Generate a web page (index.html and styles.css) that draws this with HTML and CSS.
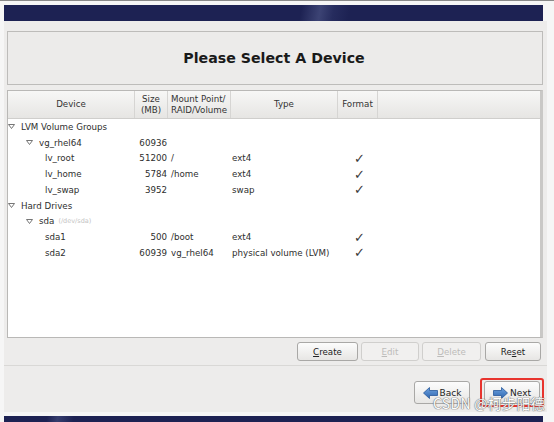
FILE: index.html
```html
<!DOCTYPE html>
<html lang="en">
<head>
  <meta charset="UTF-8">
  <title>Please Select A Device</title>
  <link rel="stylesheet" href="styles.css">
</head>
<body>
  <div class="screen">
    <!-- Top banner -->
    <div class="banner"></div>

    <!-- Installer window -->
    <div class="window">
      <div class="title-box">
        <h1>Please Select A Device</h1>
      </div>

      <!-- Device tree -->
      <div class="tree">
        <div class="tree-head">
          <div class="hcol">Device</div>
          <div class="hcol">Size<br>(MB)</div>
          <div class="hcol hcol-left">Mount Point/<br>RAID/Volume</div>
          <div class="hcol">Type</div>
          <div class="hcol">Format</div>
          <div class="hcol hcol-fill"></div>
        </div>
        <div class="tree-body">
          <div class="row">
            <div class="c-dev lvl0"><span class="arrow"><svg width="7" height="5" viewBox="0 0 7 5"><polygon points="0.5,0.5 6.5,0.5 3.5,4.5" fill="#fff" stroke="#666" stroke-width="0.9"/></svg></span>LVM Volume Groups</div>
            <div class="c-size"></div><div class="c-mount"></div><div class="c-type"></div><div class="c-fmt"></div>
          </div>
          <div class="row">
            <div class="c-dev lvl1"><span class="arrow"><svg width="7" height="5" viewBox="0 0 7 5"><polygon points="0.5,0.5 6.5,0.5 3.5,4.5" fill="#fff" stroke="#666" stroke-width="0.9"/></svg></span>vg_rhel64</div>
            <div class="c-size">60936</div><div class="c-mount"></div><div class="c-type"></div><div class="c-fmt"></div>
          </div>
          <div class="row">
            <div class="c-dev lvl2"><span class="arrow"></span>lv_root</div>
            <div class="c-size">51200</div><div class="c-mount">/</div><div class="c-type">ext4</div><div class="c-fmt">✓</div>
          </div>
          <div class="row">
            <div class="c-dev lvl2"><span class="arrow"></span>lv_home</div>
            <div class="c-size">5784</div><div class="c-mount">/home</div><div class="c-type">ext4</div><div class="c-fmt">✓</div>
          </div>
          <div class="row">
            <div class="c-dev lvl2"><span class="arrow"></span>lv_swap</div>
            <div class="c-size">3952</div><div class="c-mount"></div><div class="c-type">swap</div><div class="c-fmt">✓</div>
          </div>
          <div class="row">
            <div class="c-dev lvl0"><span class="arrow"><svg width="7" height="5" viewBox="0 0 7 5"><polygon points="0.5,0.5 6.5,0.5 3.5,4.5" fill="#fff" stroke="#666" stroke-width="0.9"/></svg></span>Hard Drives</div>
            <div class="c-size"></div><div class="c-mount"></div><div class="c-type"></div><div class="c-fmt"></div>
          </div>
          <div class="row">
            <div class="c-dev lvl1"><span class="arrow"><svg width="7" height="5" viewBox="0 0 7 5"><polygon points="0.5,0.5 6.5,0.5 3.5,4.5" fill="#fff" stroke="#666" stroke-width="0.9"/></svg></span>sda <span class="dev-path">(/dev/sda)</span></div>
            <div class="c-size"></div><div class="c-mount"></div><div class="c-type"></div><div class="c-fmt"></div>
          </div>
          <div class="row">
            <div class="c-dev lvl2"><span class="arrow"></span>sda1</div>
            <div class="c-size">500</div><div class="c-mount">/boot</div><div class="c-type">ext4</div><div class="c-fmt">✓</div>
          </div>
          <div class="row">
            <div class="c-dev lvl2"><span class="arrow"></span>sda2</div>
            <div class="c-size">60939</div><div class="c-mount">vg_rhel64</div><div class="c-type">physical volume (LVM)</div><div class="c-fmt">✓</div>
          </div>
        </div>
      </div>

      <!-- Tree actions -->
      <div class="actions">
        <button class="btn btn-create"><u>C</u>reate</button>
        <button class="btn btn-edit" disabled><u>E</u>dit</button>
        <button class="btn btn-delete" disabled><u>D</u>elete</button>
        <button class="btn btn-reset">Re<u>s</u>et</button>
      </div>

      <div class="divider"></div>

      <!-- Navigation -->
      <div class="nav">
        <button class="btn nav-btn">
          <svg width="15" height="12" viewBox="0 0 15 12"><defs><linearGradient id="ab" x1="0" y1="0" x2="0" y2="1"><stop offset="0" stop-color="#6fa3e0"/><stop offset="1" stop-color="#2e66b0"/></linearGradient></defs><polygon points="0.5,6 6.5,0.5 6.5,3.5 14.5,3.5 14.5,8.5 6.5,8.5 6.5,11.5" fill="url(#ab)" stroke="#27589a" stroke-width="0.8"/></svg>
          Back
        </button>
        <div class="highlight">
          <button class="btn nav-btn">
            <svg width="15" height="12" viewBox="0 0 15 12"><defs><linearGradient id="an" x1="0" y1="0" x2="0" y2="1"><stop offset="0" stop-color="#6fa3e0"/><stop offset="1" stop-color="#2e66b0"/></linearGradient></defs><polygon points="14.5,6 8.5,0.5 8.5,3.5 0.5,3.5 0.5,8.5 8.5,8.5 8.5,11.5" fill="url(#an)" stroke="#27589a" stroke-width="0.8"/></svg>
            Next
          </button>
        </div>
      </div>
    </div>

    <div class="gap"></div>
    <div class="banner banner-bottom"></div>

    <div class="watermark">CSDN @柯步阳德</div>
  </div>
</body>
</html>
```

FILE: styles.css
```css
/* General */
body {
  margin: 0;
  padding: 0;
  background-color: #f6f6f6;
  font-family: "DejaVu Sans", sans-serif;
  font-size: 8.7px;
  color: #2e2e2e;
}

.screen {
  position: relative;
  width: 554px;
  height: 422px;
  overflow: hidden;
  border-top: 1px solid #8a8a8a;
  box-sizing: border-box;
}

/* Banners */
.banner {
  height: 16px;
  margin: 4px 11px 0 4px;
  background: linear-gradient(100deg, #1d2253 0%, #1d2253 55%, #3c4374 58.5%, #262c5e 61%, #1d2253 64%, #1d2253 100%);
}

.banner-bottom {
  margin-top: 0;
  height: 6px;
  background: linear-gradient(100deg, #1d2253 0%, #1d2253 8%, #363d6e 10%, #1d2253 13%, #1d2253 100%);
}

.gap {
  height: 4px;
}

/* Window */
.window {
  height: 391px;
  margin: 0 7px 0 4px;
  padding: 0 4px 0 3px;
  background-color: #edeceb;
  display: flex;
  flex-direction: column;
  box-sizing: border-box;
}

.title-box {
  margin-top: 10px;
  height: 54px;
  border: 1px solid #bdbcba;
  background-color: #ecebea;
  display: flex;
  align-items: center;
  justify-content: center;
  box-sizing: border-box;
}

.title-box h1 {
  margin: 0 0 0 -2px;
  font-size: 14.2px;
  font-weight: bold;
  color: #1a1a1a;
}

/* Tree view */
.tree {
  margin-top: 5px;
  height: 248px;
  border: 1px solid #b9b8b6;
  border-right: 3px solid #c9c8c6;
  background-color: #ffffff;
  box-sizing: border-box;
}

.tree-head,
.row {
  display: grid;
  grid-template-columns: 127px 33px 63px 107px 40px 1fr;
}

.tree-head {
  height: 28px;
  background: linear-gradient(#f7f7f6, #e6e5e3);
  border-bottom: 1px solid #cfcecc;
  box-sizing: border-box;
}

.hcol {
  display: flex;
  align-items: center;
  justify-content: center;
  text-align: center;
  line-height: 11px;
  color: #333;
  border-right: 1px solid #d6d5d3;
}

.hcol-left {
  justify-content: flex-start;
  text-align: left;
  padding-left: 3px;
}

.hcol-fill {
  border-right: none;
}

.row {
  height: 15.75px;
  align-items: center;
  white-space: nowrap;
}

.c-dev {
  display: flex;
  align-items: center;
}

.lvl0 { padding-left: 0; }
.lvl1 { padding-left: 18px; }
.lvl2 { padding-left: 24px; }

.arrow {
  display: inline-flex;
  width: 13px;
  align-items: center;
}

.dev-path {
  margin-left: 4px;
  font-size: 6.5px;
  color: #c4c4c4;
}

.c-size {
  text-align: right;
  padding-right: 1px;
}

.c-mount {
  padding-left: 3px;
}

.c-type {
  padding-left: 1px;
}

.c-fmt {
  text-align: center;
  padding-left: 3px;
  font-size: 13px;
  line-height: 13px;
  color: #3a3a3a;
}

/* Buttons */
.btn {
  font-family: "DejaVu Sans", sans-serif;
  font-size: 8.7px;
  color: #222;
  background: linear-gradient(#fcfcfc, #e7e6e4);
  border: 1px solid #a9a8a6;
  border-radius: 3px;
  padding: 0;
  cursor: pointer;
}

.btn:disabled {
  color: #bdbcba;
  background: #f1f0ef;
  border-color: #d0cfcd;
}

.actions {
  margin-top: 4px;
  padding-right: 2px;
  display: flex;
  justify-content: flex-end;
  gap: 3px;
}

.actions .btn {
  height: 19px;
}

.btn-create { width: 61px; }
.btn-edit { width: 58px; }
.btn-delete { width: 59px; }
.btn-reset { width: 56px; margin-left: 1px; }

.divider {
  margin: 4px -4px 0 -3px;
  border-top: 1px solid #d9d8d6;
}

.nav {
  margin: 12px -1px 0 0;
  display: flex;
  justify-content: flex-end;
  align-items: center;
  gap: 10px;
}

.nav-btn {
  width: 56px;
  height: 23px;
  display: flex;
  align-items: center;
  justify-content: center;
  gap: 2px;
  font-size: 9px;
}

.highlight {
  padding: 1px 2px;
  border: 2px solid #e8342e;
  border-radius: 3px;
}

/* Watermark */
.watermark {
  position: absolute;
  right: 9px;
  bottom: 9px;
  font-family: "Noto Sans CJK SC", "DejaVu Sans", sans-serif;
  font-size: 14px;
  color: #ffffff;
  letter-spacing: 0.3px;
  text-shadow: 0 0 1px #6d6d6d, 0 0 1px #6d6d6d, 0 0 1px #6d6d6d;
  opacity: 0.9;
}
```
